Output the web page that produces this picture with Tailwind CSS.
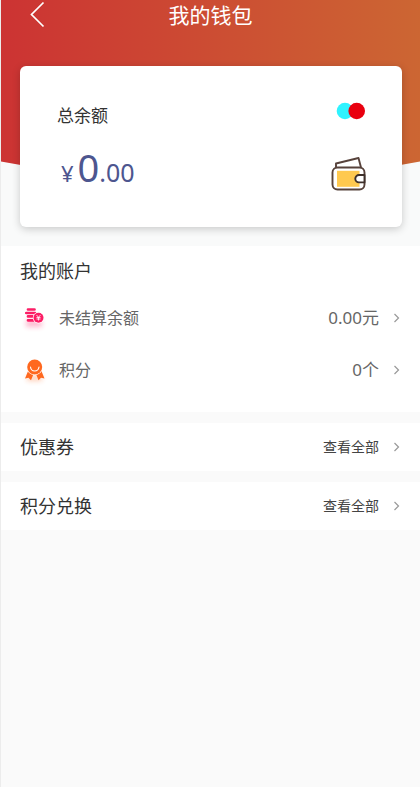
<!DOCTYPE html>
<html lang="zh-CN">
<head>
<meta charset="utf-8">
<meta name="viewport" content="width=device-width, initial-scale=1">
<title>我的钱包</title>
<script src="https://cdn.jsdelivr.net/npm/@tailwindcss/browser@4"></script>
</head>
<body class="min-h-screen border-l border-[#ececec] bg-[#fafafa] font-['Noto_Sans','Noto_Sans_CJK_SC',sans-serif] text-[#333]">
<header class="relative bg-[#f9fafa] pb-[19px]">
  <svg class="absolute top-0 left-0 h-[172px] w-full" viewBox="0 0 419 172" preserveAspectRatio="none" aria-hidden="true">
    <defs><linearGradient id="sky"><stop offset="0" stop-color="#cc3333"/><stop offset="1" stop-color="#cc6633"/></linearGradient></defs>
    <path d="M0 0H419V161.500Q210 202 0 161.500Z" fill="url(#sky)"/>
  </svg>
  <div class="relative grid grid-cols-[1fr_auto_1fr] items-center px-7 text-white">
    <button type="button" aria-label="返回" class="justify-self-start">
      <svg class="h-7 w-4" viewBox="0 0 16 28" fill="none" stroke="currentColor" stroke-width="1.700" aria-hidden="true"><path d="M14.500 1.500L2.500 13.500L14.500 25.500"/></svg>
    </button>
    <h1 class="text-[21px] leading-[30px]">我的钱包</h1>
  </div>
  <section class="relative mt-9 mr-[18px] ml-[19px] flex h-[161px] justify-between rounded-md bg-white pr-9 pl-[37px] shadow-[0_2px_8px_rgba(0,0,0,0.2)]">
    <div class="flex flex-col">
      <h2 class="mt-9 text-[17px] leading-7">总余额</h2>
      <p class="mt-3 flex items-baseline pl-1 leading-[50px] text-[#4d568f]">
        <span class="mr-1 text-[22px]">¥</span><span class="text-[38px]">0</span><span class="text-[25px]">.00</span>
      </p>
    </div>
    <div class="flex flex-col items-end pt-9">
      <svg class="h-[18px] w-[30px]" viewBox="0 0 30 18" aria-hidden="true"><circle cx="9" cy="9" r="8.300" fill="#2ff3ff"/><circle cx="20.700" cy="9" r="8.300" fill="#e9000f"/></svg>
      <svg class="mt-9 h-9 w-[35px]" viewBox="0 0 35 36" fill="none" stroke="#57423b" stroke-width="1.900" stroke-linejoin="round" aria-hidden="true">
        <path d="M5 11.500V7.500L27.500 2L30 11.500"/>
        <rect x="1.500" y="11.500" width="32" height="22" rx="5"/>
        <rect x="6" y="14.800" width="22.500" height="16" fill="#ffc94f" stroke="none"/>
        <path d="M33.500 19H28a3.700 3.700 0 0 0 0 7.400h5.500z" fill="#fff" stroke="#3e302b"/>
      </svg>
    </div>
  </section>
</header>
<main>
  <section class="bg-white pb-4">
    <h2 class="px-[19px] pt-3 pb-2 text-lg leading-[26px]">我的账户</h2>
    <a href="#unsettled" class="flex h-[52px] items-center pr-[19px] pl-[22px] text-base text-[#666]">
      <svg class="mr-3 h-8 w-6 overflow-visible" viewBox="0 0 24 32" aria-hidden="true">
        <defs><filter id="soft" x="-50%" y="-100%" width="200%" height="300%"><feGaussianBlur stdDeviation="2.500"/></filter></defs>
        <rect x="3" y="18" width="16" height="7" fill="#fc1d65" opacity="0.300" filter="url(#soft)"/>
        <g stroke="#fc1d65" stroke-width="2.700" stroke-linecap="round"><path d="M5 7.500H11.500M3.300 11H12M5 14.400H10M5 18.300H11"/></g>
        <circle cx="15.500" cy="15.700" r="5.700" fill="#fff"/>
        <circle cx="15.500" cy="15.700" r="5" fill="#fc1d65"/>
        <path d="M13.500 13L15.500 15.300L17.500 13M15.500 15.300V18.500M13.500 15.500H17.500M13.500 17H17.500" fill="none" stroke="#fff" stroke-width="0.800"/>
      </svg>
      <span>未结算余额</span>
      <span class="mr-3.5 ml-auto text-[17px]">0.00元</span>
      <svg class="h-3 w-2" viewBox="0 0 8 12" fill="none" stroke="#999" stroke-width="1.200" aria-hidden="true"><path d="M1.500 2L5.500 6L1.500 10"/></svg>
    </a>
    <a href="#points" class="flex h-[52px] items-center pr-[19px] pl-[22px] text-base text-[#666]">
      <svg class="mr-3 h-8 w-6 overflow-visible" viewBox="0 0 24 32" aria-hidden="true">
        <rect x="4" y="21" width="15" height="6" fill="#ff681f" opacity="0.300" filter="url(#soft)"/>
        <path d="M5.500 16L2 24.500L5.500 23.800L8 26.300L10.500 20H13L15.500 26.300L18 23.800L21.500 24.500L18 16Z" fill="#ff681f"/>
        <circle cx="11.700" cy="13" r="8.200" fill="#fff"/>
        <circle cx="11.700" cy="13" r="7.500" fill="#ff681f"/>
        <path d="M7.500 13Q8 17 11.700 17Q15.400 17 16 13" fill="none" stroke="#fff" stroke-width="1.100" stroke-linecap="round"/>
      </svg>
      <span>积分</span>
      <span class="mr-3.5 ml-auto text-[17px]">0个</span>
      <svg class="h-3 w-2" viewBox="0 0 8 12" fill="none" stroke="#999" stroke-width="1.200" aria-hidden="true"><path d="M1.500 2L5.500 6L1.500 10"/></svg>
    </a>
  </section>
  <section class="mt-[11px] flex h-12 items-center justify-between bg-white px-[19px]">
    <h2 class="text-lg">优惠券</h2>
    <a href="#coupons" class="flex items-center gap-3.5 text-sm text-[#444]">查看全部
      <svg class="h-3 w-2" viewBox="0 0 8 12" fill="none" stroke="#999" stroke-width="1.200" aria-hidden="true"><path d="M1.500 2L5.500 6L1.500 10"/></svg>
    </a>
  </section>
  <section class="mt-[11px] flex h-12 items-center justify-between bg-white px-[19px]">
    <h2 class="text-lg">积分兑换</h2>
    <a href="#exchange" class="flex items-center gap-3.5 text-sm text-[#444]">查看全部
      <svg class="h-3 w-2" viewBox="0 0 8 12" fill="none" stroke="#999" stroke-width="1.200" aria-hidden="true"><path d="M1.500 2L5.500 6L1.500 10"/></svg>
    </a>
  </section>
</main>
</body>
</html>
